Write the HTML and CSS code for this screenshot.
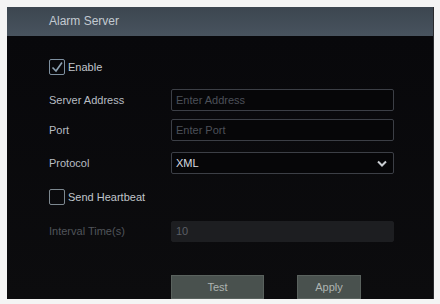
FILE: index.html
```html
<!DOCTYPE html>
<html lang="en">
  <head>
    <meta charset="UTF-8" />
    <title>Alarm Server</title>
    <link rel="stylesheet" href="styles.css">
  </head>
  <body>
    <div class="panel">
      <div class="panel-header">Alarm Server</div>
      <div class="panel-body">
        <label class="check-row">
          <span class="checkbox checked">
            <svg width="14" height="14" viewBox="0 0 14 14"><path d="M2.5 7.5 L6 11 L12 2.5" fill="none" stroke="#8fa3b3" stroke-width="1.6"/></svg>
          </span>
          <span class="check-text">Enable</span>
        </label>

        <div class="form-row address">
          <span class="form-label">Server Address</span>
          <div class="field"><span class="placeholder">Enter Address</span></div>
        </div>
        <div class="form-row port">
          <span class="form-label">Port</span>
          <div class="field"><span class="placeholder">Enter Port</span></div>
        </div>
        <div class="form-row protocol">
          <span class="form-label">Protocol</span>
          <div class="field select">
            <span class="value">XML</span>
            <svg width="10" height="7" viewBox="0 0 10 7"><path d="M1 1.5 L5 5.5 L9 1.5" fill="none" stroke="#c9cdd2" stroke-width="2"/></svg>
          </div>
        </div>

        <label class="check-row heartbeat">
          <span class="checkbox"></span>
          <span class="check-text">Send Heartbeat</span>
        </label>

        <div class="form-row disabled">
          <span class="form-label">Interval Time(s)</span>
          <div class="field filled"><span class="value">10</span></div>
        </div>

        <div class="button-row">
          <button class="btn btn-test">Test</button>
          <button class="btn btn-apply">Apply</button>
        </div>
      </div>
    </div>
  </body>
</html>
```

FILE: styles.css
```css
* {
  margin: 0;
  padding: 0;
  box-sizing: border-box;
}

body {
  width: 440px;
  height: 304px;
  background-color: #f4f4f4;
  font-family: "Liberation Sans", Arial, sans-serif;
  font-size: 11px;
  padding: 7px 6px 5px 7px;
  overflow: hidden;
}

.panel {
  height: 292px;
  background-color: #0a0a0d;
  display: flex;
  flex-direction: column;
  border-right: 1px solid #2a2b2e;
}

.panel-header {
  height: 29px;
  background: linear-gradient(#3c4650, #48535e);
  color: #c3cad1;
  font-size: 12px;
  line-height: 29px;
  padding-left: 42px;
}

.panel-body {
  flex: 1;
  padding: 23px 0 0 42px;
  display: flex;
  flex-direction: column;
  background: linear-gradient(#08080b, #0c0c0e);
}

.check-row {
  display: flex;
  align-items: center;
  gap: 3px;
  height: 16px;
  color: #c0c5cb;
}

.checkbox {
  width: 16px;
  height: 16px;
  border: 1px solid #7d8890;
  border-radius: 2px;
  display: flex;
  align-items: center;
  justify-content: center;
}

.checkbox.checked {
  border-color: #7e90a0;
}

.form-row {
  display: flex;
  align-items: center;
  height: 22px;
}

.address {
  margin-top: 14px;
}

.port {
  margin-top: 8px;
}

.protocol {
  margin-top: 11px;
}

.form-label {
  width: 122px;
  color: #b8bdc3;
}

.field {
  width: 223px;
  height: 22px;
  border: 1px solid #3c3f46;
  border-radius: 2px;
  background-color: #060608;
  display: flex;
  align-items: center;
  padding: 0 4px;
}

.placeholder {
  color: #4c5058;
}

.value {
  color: #d8dce0;
}

.select {
  justify-content: space-between;
  padding-right: 6px;
}

.heartbeat {
  margin-top: 15px;
}

.disabled {
  margin-top: 15px;
}

.disabled .form-label {
  color: #50545a;
}

.field.filled {
  background-color: #1d1e21;
  border-color: #1d1e21;
  height: 21px;
}

.field.filled .value {
  color: #5b5f65;
}

.button-row {
  display: flex;
  gap: 33px;
  margin-top: 33px;
  padding-left: 122px;
}

.btn {
  height: 24px;
  border: 1px solid #5a625e;
  background-color: #49514e;
  color: #aeb4b1;
  font-family: "Liberation Sans", Arial, sans-serif;
  font-size: 11px;
}

.btn-test {
  width: 93px;
}

.btn-apply {
  width: 64px;
}
```
